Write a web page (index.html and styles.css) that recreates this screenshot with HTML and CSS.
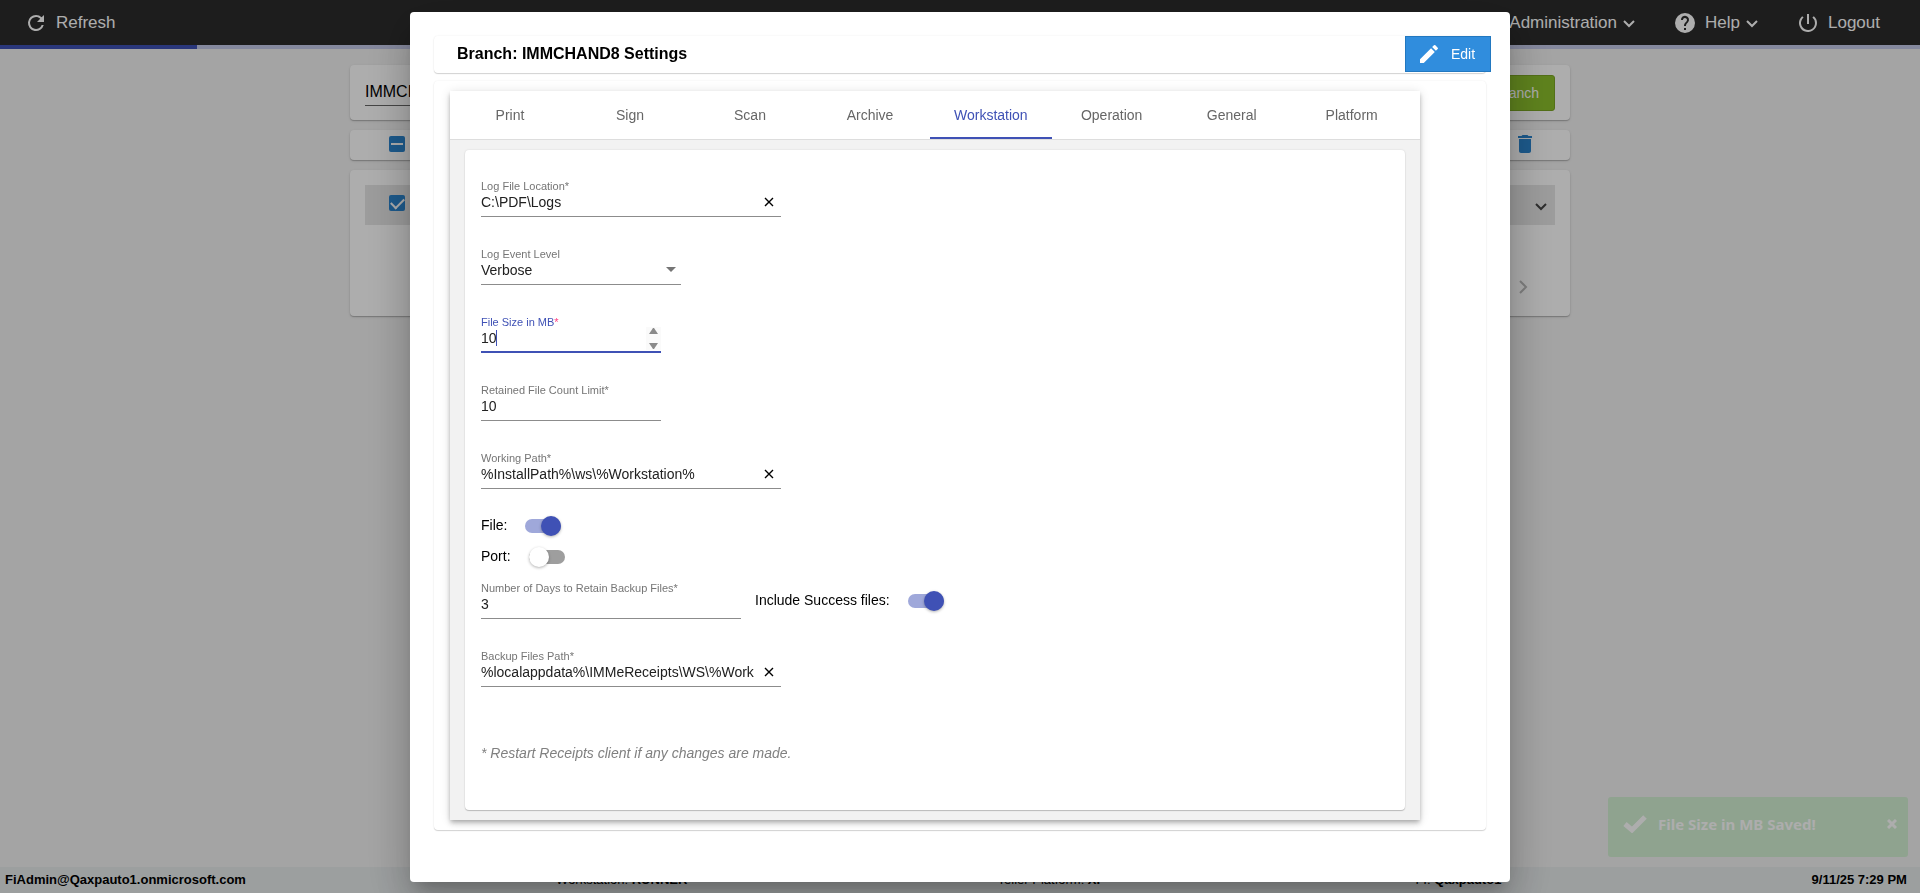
FILE: index.html
```html
<!DOCTYPE html>
<html lang="en">
<head>
    <meta charset="UTF-8">
    <title>Branch Settings</title>
    <link rel="stylesheet" href="styles.css">
</head>
<body>
<header class="topbar">
    <button class="nav-item">
        <svg width="24" height="24" viewBox="0 0 24 24"><path d="M17.65 6.35A7.96 7.96 0 0 0 12 4a8 8 0 1 0 7.73 10h-2.08A6 6 0 1 1 12 6c1.66 0 3.14.69 4.22 1.78L13 11h7V4z"/></svg>
        Refresh
    </button>
    <nav class="nav-right">
        <button class="nav-item">Administration
            <svg class="chev" width="12" height="8" viewBox="0 0 12 8"><path d="M1 1l5 5 5-5"/></svg>
        </button>
        <button class="nav-item">
            <svg width="24" height="24" viewBox="0 0 24 24"><path d="M12 2a10 10 0 1 0 0 20 10 10 0 0 0 0-20zm1 17h-2v-2h2zm2.07-7.75l-.9.92C13.45 12.9 13 13.5 13 15h-2v-.5c0-1.1.45-2.1 1.17-2.83l1.24-1.26A2 2 0 1 0 10 9H8a4 4 0 1 1 7.07 2.25z"/></svg>
            Help
            <svg class="chev" width="12" height="8" viewBox="0 0 12 8"><path d="M1 1l5 5 5-5"/></svg>
        </button>
        <button class="nav-item">
            <svg width="24" height="24" viewBox="0 0 24 24"><path d="M13 3h-2v10h2zm4.83 2.17l-1.42 1.42A6.92 6.92 0 0 1 19 12a7 7 0 1 1-11.42-5.42L6.17 5.17A9 9 0 1 0 21 12a8.94 8.94 0 0 0-3.17-6.83z"/></svg>
            Logout
        </button>
    </nav>
</header>
<div class="progress"><div class="progress-bar"></div></div>

<main class="page">
    <section class="card search">
        <input type="text" class="search-input" value="IMMCHAND8" aria-label="Search branch">
        <button class="add-branch">Add Branch</button>
    </section>
    <section class="card actions">
        <input type="checkbox" class="check partial" aria-label="Select all">
        <button class="icon-btn trash" aria-label="Delete">
            <svg width="24" height="24" viewBox="0 0 24 24"><path d="M6 19c0 1.1.9 2 2 2h8c1.1 0 2-.9 2-2V7H6zM19 4h-3.5l-1-1h-5l-1 1H5v2h14z"/></svg>
        </button>
    </section>
    <section class="card list">
        <div class="list-row">
            <input type="checkbox" class="check" checked aria-label="Select branch">
            <button class="icon-btn expand" aria-label="Expand">
                <svg class="chev" width="12" height="8" viewBox="0 0 12 8"><path d="M1 1l5 5 5-5"/></svg>
            </button>
        </div>
        <button class="icon-btn next" aria-label="Next page" disabled>
            <svg class="chev" width="10" height="14" viewBox="0 0 10 14"><path d="M1 1l6 6-6 6"/></svg>
        </button>
    </section>
</main>

<footer class="status">
    <b>FiAdmin@Qaxpauto1.onmicrosoft.com</b>
    <span>Workstation: <b>RUNNER</b></span>
    <span>Teller Platform: <b>XP</b></span>
    <span>FI: <b>Qaxpauto1</b></span>
    <b>9/11/25 7:29 PM</b>
</footer>

<div class="toast">
    <svg width="24" height="18" viewBox="0 0 24 18"><path d="M2 9l7 6L22 2" fill="none" stroke="currentColor" stroke-width="5"/></svg>
    <span>File Size in MB Saved!</span>
    <button class="toast-close" aria-label="Close">
        <svg width="10" height="10" viewBox="0 0 10 10"><path d="M1 1l8 8M9 1l-8 8" stroke="currentColor" stroke-width="3"/></svg>
    </button>
</div>

<div class="backdrop">
    <div class="dialog" role="dialog" aria-labelledby="title">
        <div class="dialog-head">
            <h1 id="title">Branch: IMMCHAND8 Settings</h1>
            <button class="edit">
                <svg width="24" height="24" viewBox="0 0 24 24"><path d="M3 17.25V21h3.75L17.81 9.94l-3.75-3.75zM20.71 7.04a1 1 0 0 0 0-1.41l-2.34-2.34a1 1 0 0 0-1.41 0l-1.83 1.83 3.75 3.75z"/></svg>
                Edit
            </button>
        </div>
        <div class="dialog-body">
            <div class="tabs-box">
                <div class="tabs">
                    <button class="tab">Print</button>
                    <button class="tab">Sign</button>
                    <button class="tab">Scan</button>
                    <button class="tab">Archive</button>
                    <button class="tab active">Workstation</button>
                    <button class="tab">Operation</button>
                    <button class="tab">General</button>
                    <button class="tab">Platform</button>
                </div>
                <form class="panel">
                    <div class="field wide">
                        <label for="log">Log File Location*</label>
                        <div class="line">
                            <input type="text" id="log" value="C:\PDF\Logs">
                            <button type="button" class="clear" aria-label="Clear"><svg width="10" height="10" viewBox="0 0 10 10"><path d="M1 1l8 8M9 1l-8 8"/></svg></button>
                        </div>
                    </div>
                    <div class="field select">
                        <label for="level">Log Event Level</label>
                        <div class="line">
                            <select id="level"><option>Verbose</option></select>
                            <i class="arrow"></i>
                        </div>
                    </div>
                    <div class="field small focused">
                        <label for="size">File Size in MB<em>*</em></label>
                        <div class="line">
                            <input type="text" id="size" value="10">
                            <i class="caret"></i>
                            <span class="spin"><i class="up"></i><i class="down"></i></span>
                        </div>
                    </div>
                    <div class="field small">
                        <label for="count">Retained File Count Limit*</label>
                        <div class="line"><input type="text" id="count" value="10"></div>
                    </div>
                    <div class="field wide">
                        <label for="path">Working Path*</label>
                        <div class="line">
                            <input type="text" id="path" value="%InstallPath%\ws\%Workstation%">
                            <button type="button" class="clear" aria-label="Clear"><svg width="10" height="10" viewBox="0 0 10 10"><path d="M1 1l8 8M9 1l-8 8"/></svg></button>
                        </div>
                    </div>
                    <div class="toggles">
                        <label class="toggle-row">File: <input type="checkbox" class="toggle" checked></label>
                        <label class="toggle-row">Port: <input type="checkbox" class="toggle"></label>
                    </div>
                    <div class="row">
                        <div class="field days">
                            <label for="days">Number of Days to Retain Backup Files*</label>
                            <div class="line"><input type="text" id="days" value="3"></div>
                        </div>
                        <label class="toggle-row">Include Success files: <input type="checkbox" class="toggle" checked></label>
                    </div>
                    <div class="field wide">
                        <label for="backup">Backup Files Path*</label>
                        <div class="line">
                            <input type="text" id="backup" value="%localappdata%\IMMeReceipts\WS\%Workstation%">
                            <button type="button" class="clear" aria-label="Clear"><svg width="10" height="10" viewBox="0 0 10 10"><path d="M1 1l8 8M9 1l-8 8"/></svg></button>
                        </div>
                    </div>
                    <p class="note">* Restart Receipts client if any changes are made.</p>
                </form>
            </div>
        </div>
    </div>
</div>
</body>
</html>
```
FILE: styles.css
```css
* {
    box-sizing: border-box;
}

body {
    margin: 0;
    min-height: 100vh;
    display: flex;
    flex-direction: column;
    background-color: #f2f2f2;
    font-family: "Liberation Sans", Arial, sans-serif;
    font-size: 14px;
}

button {
    padding: 0;
    border: none;
    background: none;
    font: inherit;
    color: inherit;
}

svg {
    display: block;
    fill: currentColor;
}

.chev {
    fill: none;
    stroke: currentColor;
    stroke-width: 2;
}

/* top bar */
.topbar {
    height: 45px;
    padding: 0 40px 0 24px;
    display: flex;
    justify-content: space-between;
    align-items: center;
    background-color: #2c2c2c;
    color: #fff;
    font-size: 17px;
}

.nav-right {
    display: flex;
    gap: 38px;
}

.nav-item {
    display: flex;
    align-items: center;
    gap: 8px;
}

.nav-item .chev {
    margin: 2px 0 0 -2px;
}

.progress {
    height: 4px;
    background-color: #c5cae9;
}

.progress-bar {
    width: 197px;
    height: 4px;
    background-color: #3f51b5;
}

/* branch list */
.page {
    flex: 1;
    width: 1220px;
    margin: 0 auto;
    padding-top: 16px;
}

.card {
    display: flex;
    justify-content: space-between;
    margin-bottom: 10px;
    border-radius: 4px;
    background-color: #fff;
    box-shadow: 0 1px 1px rgba(0, 0, 0, 0.2), 0 1px 3px rgba(0, 0, 0, 0.12);
}

.search {
    height: 55px;
    padding: 10px 15px;
}

.search-input {
    width: 300px;
    height: 26px;
    margin-top: 5px;
    padding: 0 0 2px;
    border: none;
    border-bottom: 1px solid #666;
    background: none;
    font: 16px "Liberation Sans", Arial, sans-serif;
}

.add-branch {
    height: 36px;
    padding: 0 15px;
    border: 1px solid #7ba524;
    border-radius: 3px;
    background-color: #8cc02c;
    color: #fff;
}

.actions {
    height: 30px;
    padding: 0 33px 2px 39px;
    align-items: center;
}

.list {
    height: 146px;
    padding: 15px;
    flex-direction: column;
}

.list-row {
    height: 40px;
    padding: 0 8px 0 24px;
    display: flex;
    justify-content: space-between;
    align-items: center;
    background-color: #e6e6e6;
}

.icon-btn {
    color: #444;
}

.expand {
    margin-top: 4px;
}

.trash {
    color: #2b85cf;
}

.next {
    align-self: flex-end;
    margin: 0 26px 7px 0;
    color: #bbb;
}

.check {
    appearance: none;
    width: 16px;
    height: 16px;
    margin: 0;
    border-radius: 2px;
    background-color: #2b85cf;
    display: grid;
    place-items: center;
}

.check:checked {
    margin-bottom: 4px;
}

.check.partial::after {
    content: "";
    width: 12px;
    height: 2px;
    background-color: #fff;
}

.check:checked::after {
    content: "";
    width: 11px;
    height: 6px;
    border-left: 2px solid #fff;
    border-bottom: 2px solid #fff;
    transform: translateY(-1px) rotate(-45deg);
}

/* status bar */
.status {
    height: 26px;
    padding: 0 13px 1px 5px;
    display: flex;
    justify-content: space-between;
    align-items: center;
    background-color: #e6eaeb;
    font-size: 13px;
}

/* toast */
.toast {
    position: fixed;
    right: 12px;
    bottom: 36px;
    width: 300px;
    height: 60px;
    padding: 0 11px 6px 15px;
    display: flex;
    align-items: center;
    gap: 11px;
    border-radius: 3px;
    background-color: #d3f0d3;
    color: #fff;
    font-family: "Noto Sans", sans-serif;
    font-size: 15px;
    font-weight: bold;
}

.toast-close {
    margin-left: auto;
}

/* dialog */
.backdrop {
    position: fixed;
    top: 0;
    bottom: 0;
    left: 0;
    right: 0;
    display: flex;
    justify-content: center;
    align-items: flex-start;
    padding-top: 12px;
    background-color: rgba(0, 0, 0, 0.32);
}

.dialog {
    width: 1100px;
    padding: 24px 24px 52px;
    border-radius: 4px;
    background-color: #fff;
    box-shadow: 0 11px 15px -7px rgba(0, 0, 0, 0.2), 0 24px 38px 3px rgba(0, 0, 0, 0.14), 0 9px 46px 8px rgba(0, 0, 0, 0.12);
}

.dialog-head,
.dialog-body {
    border-radius: 4px;
    box-shadow: 0 1px 1px rgba(0, 0, 0, 0.16), 0 0 2px rgba(0, 0, 0, 0.08);
}

.dialog-head {
    height: 37px;
    margin-bottom: 8px;
    padding-left: 23px;
    display: flex;
    justify-content: space-between;
    align-items: flex-start;
}

.dialog-head h1 {
    margin: 0;
    font-size: 16px;
    line-height: 36px;
}

.edit {
    width: 86px;
    height: 36px;
    margin-right: -5px;
    padding-left: 11px;
    display: flex;
    align-items: center;
    gap: 10px;
    border: 1px solid #2278c0;
    background-color: #308ddd;
    color: #fff;
}

.dialog-body {
    padding: 10px 66px 10px 16px;
}

.tabs-box {
    padding-bottom: 10px;
    background-color: #f2f2f2;
    box-shadow: 0 2px 4px -1px rgba(0, 0, 0, 0.2), 0 4px 5px rgba(0, 0, 0, 0.14), 0 1px 10px rgba(0, 0, 0, 0.12);
}

.tabs {
    height: 49px;
    display: flex;
    border-bottom: 1px solid #ddd;
    background-color: #fff;
}

.tab {
    min-width: 120px;
    padding: 0 24px;
    border-top: 2px solid transparent;
    border-bottom: 2px solid transparent;
    color: #666;
}

.tab.active {
    border-bottom-color: #3f51b5;
    color: #3f51b5;
}

.panel {
    height: 660px;
    margin: 10px 15px 0;
    padding: 29px 16px 0;
    border-radius: 4px;
    background-color: #fff;
    box-shadow: 0 1px 1px rgba(0, 0, 0, 0.2), 0 0 2px rgba(0, 0, 0, 0.12);
}

.field {
    height: 38px;
    margin-bottom: 30px;
}

.field label {
    display: block;
    font-size: 11px;
    line-height: 15px;
    color: #757575;
}

.field.wide {
    width: 300px;
}

.field.select {
    width: 200px;
}

.field.small {
    width: 180px;
}

.field.days {
    width: 260px;
}

.line {
    height: 23px;
    display: flex;
    align-items: flex-start;
    position: relative;
    border-bottom: 1px solid #8c8c8c;
}

.line input,
.line select {
    appearance: none;
    flex: 1;
    min-width: 0;
    height: 16px;
    padding: 0;
    border: none;
    outline: none;
    background: none;
    font: 14px "Liberation Sans", Arial, sans-serif;
    color: #212121;
}

.clear {
    margin: 3px 7px 0 10px;
}

.clear path {
    stroke: #000;
    stroke-width: 1.4;
}

.arrow {
    margin: 5px 5px 0 0;
    border: 5px solid transparent;
    border-top-color: #757575;
    border-bottom: none;
}

.focused label {
    color: #3f51b5;
}

.focused em {
    color: #ff4081;
    font-style: normal;
}

.focused .line {
    border-bottom: 2px solid #3f51b5;
}

/* text cursor after the value */
.caret {
    position: absolute;
    left: 15px;
    width: 1px;
    height: 16px;
    background-color: #3f51b5;
}

.spin {
    width: 15px;
    height: 23px;
    margin-top: -3px;
    padding: 1px 3px;
    display: flex;
    flex-direction: column;
    justify-content: space-between;
    background-color: #fafafa;
}

.up,
.down {
    border: 4px solid transparent;
}

.up {
    border-top: none;
    border-bottom: 6px solid #8a8a8a;
}

.down {
    border-bottom: none;
    border-top: 6px solid #8a8a8a;
}

.toggles {
    margin: -10px 0 10px;
}

.toggle-row {
    height: 31px;
    display: flex;
    align-items: center;
    gap: 18px;
}

.toggle {
    appearance: none;
    width: 36px;
    height: 14px;
    margin: 2px 0 0;
    display: flex;
    align-items: center;
    border-radius: 7px;
    background-color: #9e9e9e;
}

.toggle::before {
    content: "";
    width: 20px;
    height: 20px;
    flex-shrink: 0;
    border-radius: 50%;
    background-color: #fff;
    box-shadow: 0 1px 3px rgba(0, 0, 0, 0.3);
}

.toggle:checked {
    background-color: #9fa8da;
}

.toggle:checked::before {
    margin-left: 16px;
    background-color: #3f51b5;
}

.row {
    display: flex;
    gap: 14px;
}

.row .toggle-row {
    height: 38px;
}

.note {
    margin: 58px 0 0;
    font-style: italic;
    color: #808080;
}
```
